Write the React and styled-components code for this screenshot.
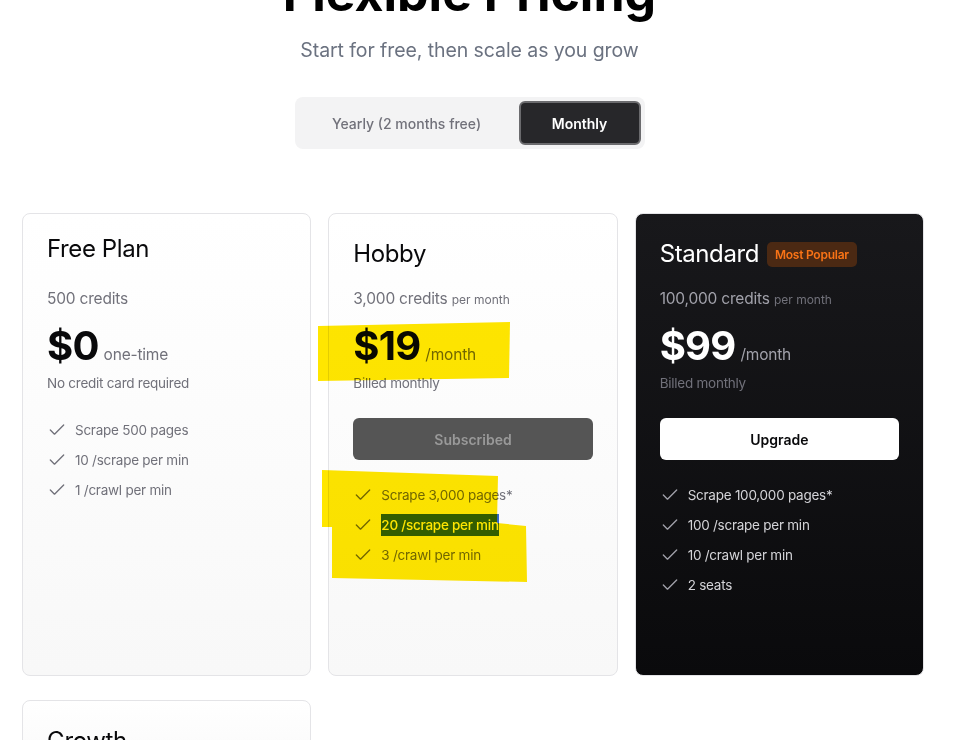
import React from "react";
import styled, { createGlobalStyle } from "styled-components";
import { Check } from "lucide-react";

const GlobalStyle = createGlobalStyle`
  html, body {
    margin: 0;
    padding: 0;
    background: #ffffff;
    overflow: hidden;
  }
  body {
    font-family: Inter, "Noto Sans", "Liberation Sans", sans-serif;
    color: #09090b;
  }
  * {
    box-sizing: border-box;
  }
`;

const Page = styled.div`
  position: relative;
  width: 955px;
  height: 740px;
  overflow: hidden;
  padding: 0 31px 0 22px;
`;

const Hero = styled.section`
  display: flex;
  flex-direction: column;
  align-items: center;
  padding-right: 7px;
`;

const Title = styled.h1`
  margin: -37px 0 0;
  font-size: 50px;
  line-height: 60px;
  font-weight: 700;
  color: #000;
`;

const Subtitle = styled.p`
  margin: 13px 0 0;
  font-size: 19.5px;
  line-height: 28px;
  letter-spacing: -0.08px;
  color: #6b7280;
`;

const Toggle = styled.div`
  display: flex;
  gap: 4px;
  margin-top: 33px;
  padding: 4px;
  width: 350px;
  height: 52px;
  background: #f3f3f4;
  border-radius: 8px;
`;

const ToggleButton = styled.button`
  flex: ${props => (props.active ? "0 0 122px" : "1")};
  border: 2px solid ${props => (props.active ? "#6b6b6e" : "transparent")};
  border-radius: 6px;
  background: ${props => (props.active ? "#27272a" : "transparent")};
  color: ${props => (props.active ? "#ffffff" : "#71717a")};
  font-family: inherit;
  font-size: 14px;
  font-weight: ${props => (props.active ? 600 : 500)};
`;

const Grid = styled.div`
  display: grid;
  grid-template-columns: repeat(3, 1fr);
  column-gap: 17px;
  row-gap: 24px;
  margin-top: 64px;
  width: 902px;
`;

const Card = styled.div`
  position: relative;
  display: flex;
  flex-direction: column;
  height: ${props => (props.short ? "auto" : "463px")};
  padding: 24px;
  border: 1px solid #e4e4e7;
  border-radius: 8px;
  background: ${props =>
    props.dark
      ? "linear-gradient(180deg, #18181b 0%, #0a0a0c 100%)"
      : "linear-gradient(180deg, #ffffff 0%, #f8f8f8 100%)"};
  color: ${props => (props.dark ? "#ffffff" : "#09090b")};
`;

const TitleRow = styled.div`
  display: flex;
  align-items: center;
  gap: 8px;
  height: 32px;
  margin-top: ${props => (props.raised ? "-5px" : "0")};
  margin-bottom: ${props => (props.raised ? "5px" : "0")};
`;

const PlanName = styled.h2`
  margin: 0;
  font-size: 24px;
  line-height: 32px;
  font-weight: 400;
  letter-spacing: -0.4px;
`;

const Badge = styled.span`
  display: inline-flex;
  align-items: center;
  height: 25px;
  padding: 0 8px;
  border-radius: 5px;
  background: #4b2913;
  color: #f97316;
  font-size: 12px;
  font-weight: 600;
  letter-spacing: -0.25px;
`;

const Credits = styled.div`
  margin-top: 17px;
  font-size: 15.5px;
  line-height: 24px;
  letter-spacing: -0.2px;
  color: ${props => (props.dark ? "#a1a1aa" : "#71717a")};
`;

const Per = styled.span`
  font-size: 12px;
  line-height: 1;
  letter-spacing: 0;
  color: #71717a;
`;

const PriceRow = styled.div`
  display: flex;
  align-items: baseline;
  gap: 5px;
  margin-top: 15px;
`;

const Amount = styled.span`
  font-size: 40px;
  line-height: 40px;
  font-weight: 700;
  letter-spacing: -0.8px;
`;

const Period = styled.span`
  font-size: 15.5px;
  letter-spacing: -0.2px;
  color: ${props => (props.dark ? "#a1a1aa" : "#71717a")};
`;

const Note = styled.div`
  margin-top: 7px;
  font-size: 13.5px;
  line-height: 20px;
  letter-spacing: -0.25px;
  color: #71717a;
`;

const ActionButton = styled.button`
  margin-top: 25px;
  height: 42px;
  border: none;
  border-radius: 6px;
  background: ${props => (props.variant === "light" ? "#ffffff" : "#555555")};
  color: ${props => (props.variant === "light" ? "#09090b" : "#999999")};
  font-family: inherit;
  font-size: 14px;
  font-weight: 600;
`;

const Features = styled.ul`
  display: flex;
  flex-direction: column;
  gap: 10px;
  margin: ${props => (props.loose ? "27px" : "25px")} 0 0;
  padding: 0;
  list-style: none;
`;

const Feature = styled.li`
  display: flex;
  align-items: center;
  gap: 8px;
  height: 20px;
  font-size: 13.5px;
  letter-spacing: -0.25px;
  color: ${props => (props.dark ? "#d4d4d8" : "#71717a")};

  svg {
    flex: none;
    color: ${props => (props.dark ? "#a1a1aa" : "#71717a")};
  }
`;

const Selected = styled.span`
  display: inline-block;
  margin: -1px 0;
  line-height: 22px;
  background: #3367d1;
  color: #ffffff;
  font-weight: 500;
`;

const Marker = styled.svg`
  position: absolute;
  top: 0;
  left: 0;
  pointer-events: none;
  mix-blend-mode: multiply;
`;

const plans = [
  {
    name: "Free Plan",
    credits: "500 credits",
    amount: "$0",
    period: "one-time",
    note: "No credit card required",
    features: ["Scrape 500 pages", "10 /scrape per min", "1 /crawl per min"],
  },
  {
    name: "Hobby",
    credits: "3,000 credits",
    per: "per month",
    amount: "$19",
    period: "/month",
    note: "Billed monthly",
    action: "Subscribed",
    features: ["Scrape 3,000 pages*", "20 /scrape per min", "3 /crawl per min"],
    selected: 1,
  },
  {
    name: "Standard",
    badge: "Most Popular",
    credits: "100,000 credits",
    per: "per month",
    amount: "$99",
    period: "/month",
    note: "Billed monthly",
    action: "Upgrade",
    light: true,
    dark: true,
    features: [
      "Scrape 100,000 pages*",
      "100 /scrape per min",
      "10 /crawl per min",
      "2 seats",
    ],
  },
];

const PlanCard = ({ plan, first }) => (
  <Card dark={plan.dark}>
    <TitleRow raised={first}>
      <PlanName>{plan.name}</PlanName>
      {plan.badge && <Badge>{plan.badge}</Badge>}
    </TitleRow>
    <Credits dark={plan.dark}>
      {plan.credits} {plan.per && <Per>{plan.per}</Per>}
    </Credits>
    <PriceRow>
      <Amount>{plan.amount}</Amount>
      <Period dark={plan.dark}>{plan.period}</Period>
    </PriceRow>
    <Note>{plan.note}</Note>
    {plan.action && (
      <ActionButton variant={plan.light ? "light" : "muted"}>
        {plan.action}
      </ActionButton>
    )}
    <Features loose={!plan.action}>
      {plan.features.map((f, i) => (
        <Feature key={f} dark={plan.dark}>
          <Check size={20} strokeWidth={1.6} />
          {plan.selected === i ? <Selected>{f}</Selected> : f}
        </Feature>
      ))}
    </Features>
  </Card>
);

export default function App() {
  return (
    <Page>
      <GlobalStyle />
      <Hero>
        <Title>Flexible Pricing</Title>
        <Subtitle>Start for free, then scale as you grow</Subtitle>
        <Toggle>
          <ToggleButton>Yearly (2 months free)</ToggleButton>
          <ToggleButton active>Monthly</ToggleButton>
        </Toggle>
      </Hero>
      <Grid>
        {plans.map((p, i) => (
          <PlanCard key={p.name} plan={p} first={i === 0} />
        ))}
        <Card short>
          <TitleRow>
            <PlanName>Growth</PlanName>
          </TitleRow>
        </Card>
      </Grid>
      <Marker width="955" height="740" viewBox="0 0 955 740">
        <polygon fill="#ffe600" points="318,326 510,322 509,378 318,381" />
        <polygon
          fill="#ffe600"
          points="322,470 498,476 497,523 526,526 527,582 332,578 332,527 322,527"
        />
      </Marker>
    </Page>
  );
}
